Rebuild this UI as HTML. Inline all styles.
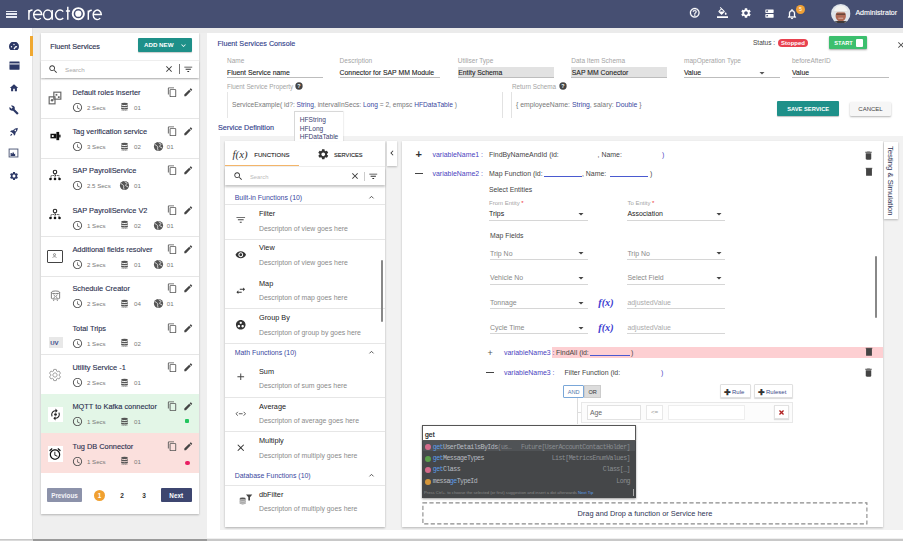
<!DOCTYPE html><html><head><meta charset="utf-8"><style>
*{margin:0;padding:0;box-sizing:border-box}
html,body{width:903px;height:541px;overflow:hidden;background:#efefef;font-family:"Liberation Sans",sans-serif}
.a{position:absolute}
.t{position:absolute;white-space:nowrap;line-height:1}
.mono{font-family:Liberation Mono,monospace}
</style></head><body>
<div class="a" style="left:0.0px;top:0.0px;width:903.0px;height:541.0px;background:#efefef"></div>
<div class="a" style="left:0.0px;top:0.0px;width:903.0px;height:27.5px;background:#464f72"></div>
<div class="a" style="left:0.0px;top:27.5px;width:33.0px;height:513.5px;background:#fff;border-right:1px solid #e2e2e2"></div>
<div class="a" style="left:33.0px;top:27.5px;width:870.0px;height:5.5px;background:#ebebeb"></div>
<div class="a" style="left:40.5px;top:33.0px;width:158.0px;height:481.0px;background:#fff;box-shadow:0 1px 2px rgba(0,0,0,.25)"></div>
<div class="a" style="left:207.0px;top:33.0px;width:696.0px;height:505.0px;background:#fff"></div>
<div class="a" style="left:0.0px;top:539.0px;width:903.0px;height:2.0px;background:#c8c8c8"></div>
<div class="a" style="left:0.0px;top:539.6px;width:33.0px;height:1.4px;background:#dadada"></div>
<div class="a" style="left:33.0px;top:539.0px;width:174.0px;height:2.0px;background:#9a9a9a"></div>
<div class="a" style="left:6.0px;top:10.8px;width:11.0px;height:1.5px;background:#e6e9f2"></div>
<div class="a" style="left:6.0px;top:13.4px;width:11.0px;height:1.5px;background:#e6e9f2"></div>
<div class="a" style="left:6.0px;top:16.2px;width:11.0px;height:1.5px;background:#e6e9f2"></div>
<svg class="a" style="left:0;top:0" width="120" height="27" viewBox="0 0 120 27"><g fill="none" stroke="#fff" stroke-width="1.45"><path d="M28.9 19.8V10M28.9 14c0-2.6 1.4-4 3.6-4"/><path d="M33.6 14.5h8.2a4.1 4.75 0 1 0-1.1 3.6"/><ellipse cx="47.8" cy="14.8" rx="4.2" ry="4.75"/><path d="M52.2 10v9.8"/><path d="M63.2 11.6a4.4 4.75 0 1 0 0 6.4"/><path d="M67.8 6.7v13.1M65.9 11h4.2"/><path d="M88.3 19.8V10.4M88.3 14.2c0-2.6 1.4-3.9 3.5-3.9"/><path d="M93.1 14.5h8.2a4.1 4.75 0 1 0-1.1 3.6"/></g><circle cx="78.3" cy="13.7" r="5.6" fill="none" stroke="#fff" stroke-width="1.9"/><circle cx="78.3" cy="13.7" r="3.1" fill="#fff"/></svg>
<svg class="a" style="left:689.0px;top:7.2px;" width="11.5" height="11.5" viewBox="0 0 24 24"><path d="M11 18h2v-2h-2v2zm1-16C6.48 2 2 6.48 2 12s4.48 10 10 10 10-4.480 10-10S17.52 2 12 2zm0 18c-4.41 0-8-3.59-8-8s3.59-8 8-8 8 3.59 8 8-3.59 8-8 8zm0-14c-2.21 0-4 1.79-4 4h2c0-1.1.9-2 2-2s2 .9 2 2c0 2-3 1.75-3 5h2c0-2.25 3-2.5 3-5 0-2.21-1.79-4-4-4z" fill="#fff" stroke="#fff" stroke-width="0.7"/></svg>
<svg class="a" style="left:717.0px;top:7.0px;" width="11" height="11" viewBox="0 0 24 24"><path d="M16.56 8.94L7.62 0 6.21 1.41l2.38 2.38-5.15 5.15c-.59.59-.59 1.54 0 2.12l5.5 5.5c.29.29.68.44 1.06.44s.77-.15 1.06-.44l5.5-5.5c.59-.58.59-1.53 0-2.12zM5.21 10L10 5.21 14.79 10H5.21zM19 11.5s-2 2.17-2 3.5c0 1.1.9 2 2 2s2-.9 2-2c0-1.33-2-3.5-2-3.5zM0 20h24v4H0z" fill="#fff"/></svg>
<svg class="a" style="left:740.0px;top:7.0px;" width="12" height="12" viewBox="0 0 24 24"><path d="M19.14 12.94c.04-.3.06-.61.06-.94 0-.32-.02-.64-.07-.94l2.03-1.58c.18-.14.23-.41.12-.61l-1.92-3.32c-.12-.22-.37-.29-.59-.22l-2.39.96c-.5-.38-1.03-.7-1.62-.94l-.36-2.54c-.04-.24-.24-.41-.48-.41h-3.84c-.24 0-.43.17-.47.41l-.36 2.54c-.59.24-1.13.57-1.62.94l-2.39-.96c-.22-.08-.47 0-.59.22L2.74 8.87c-.12.21-.08.47.12.61l2.03 1.58c-.05.3-.09.63-.09.94s.02.64.07.94l-2.03 1.58c-.18.14-.23.41-.12.61l1.92 3.32c.12.22.37.29.59.22l2.39-.96c.5.38 1.03.7 1.62.94l.36 2.54c.05.24.24.41.48.41h3.84c.24 0 .44-.17.47-.41l.36-2.54c.59-.24 1.13-.56 1.62-.94l2.39.96c.22.08.47 0 .59-.22l1.92-3.32c.12-.22.07-.47-.12-.61l-2.01-1.58zM12 15.6c-1.98 0-3.6-1.62-3.6-3.6s1.62-3.6 3.6-3.6 3.6 1.62 3.6 3.6-1.62 3.6-3.6 3.6z" fill="#fff"/></svg>
<svg class="a" style="left:764.1px;top:7.5px;" width="11" height="11" viewBox="0 0 24 24"><path d="M20 13H4c-.55 0-1 .45-1 1v6c0 .55.45 1 1 1h16c.55 0 1-.45 1-1v-6c0-.55-.45-1-1-1zM7 19c-1.1 0-2-.9-2-2s.9-2 2-2 2 .9 2 2-.9 2-2 2zM20 3H4c-.55 0-1 .45-1 1v6c0 .55.45 1 1 1h16c.55 0 1-.45 1-1V4c0-.55-.45-1-1-1zM7 9c-1.1 0-2-.9-2-2s.9-2 2-2 2 .9 2 2-.9 2-2 2z" fill="#fff"/></svg>
<svg class="a" style="left:785.6px;top:7.5px;" width="12" height="12" viewBox="0 0 24 24"><path d="M12 22c1.1 0 2-.9 2-2h-4c0 1.1.9 2 2 2zm6-6v-5c0-3.07-1.63-5.64-4.5-6.32V4c0-.83-.67-1.5-1.5-1.5s-1.5.67-1.5 1.5v.68C7.64 5.36 6 7.92 6 11v5l-2 2v1h16v-1l-2-2zm-2 1H8v-6c0-2.48 1.51-4.5 4-4.5s4 2.02 4 4.5v6z" fill="#fff" stroke="#fff" stroke-width="0.6"/></svg>
<svg class="a" style="left:795.7px;top:4.5px;" width="9" height="9" viewBox="0 0 24 24"><circle cx="12" cy="12" r="12" fill="#f0a035"/><text x="12" y="17" font-size="14" text-anchor="middle" fill="#fff" font-family="Liberation Sans">5</text></svg>
<svg class="a" style="left:831.0px;top:3.6px;" width="19.5" height="19.5" viewBox="0 0 24 24"><defs><clipPath id="av"><circle cx="12" cy="12" r="12"/></clipPath></defs><g clip-path="url(#av)"><rect width="24" height="24" fill="#dfe4ea"/><ellipse cx="12" cy="14.8" rx="6.4" ry="6.8" fill="#b06a55"/><path d="M4 9.2c0-4.8 3.6-7 8-7s8 2.2 8 7z" fill="#f4f4f2"/><rect x="3.5" y="8.8" width="17" height="1.5" fill="#e0e0de"/><rect x="6.5" y="11.8" width="11" height="1.5" fill="#2e2624" opacity=".65"/><path d="M9 17.5h6" stroke="#fff" stroke-width="1" opacity=".6"/><path d="M1 24c2-2.5 5-3 11-3s9 .5 11 3z" fill="#3f3a3a"/></g></svg>
<div class="t " style="left:855.4px;top:10px;font-size:7.1px;color:#fff;font-weight:400;-webkit-text-stroke:0.12px #fff">Administrator</div>
<div class="a" style="left:30.0px;top:36.0px;width:2.5px;height:19.5px;background:#f0a830"></div>
<svg class="a" style="left:9.2px;top:41.6px;" width="10" height="8" viewBox="1 1.5 22 17.5"><path d="M4.2 19A11 11 0 1 1 19.8 19Z" fill="#2c3866"/><path d="M12 17l4-6" stroke="#fff" stroke-width="2.6"/><circle cx="6.5" cy="12" r="1.5" fill="#fff"/><circle cx="12" cy="7" r="1.5" fill="#fff"/><circle cx="17.5" cy="12" r="1.5" fill="#fff"/></svg>
<svg class="a" style="left:8.7px;top:60.1px;" width="11" height="11" viewBox="0 0 24 24"><rect x="1" y="3" width="22" height="18" rx="1" fill="#2c3866"/><rect x="1" y="7.5" width="22" height="2.2" fill="#fff"/></svg>
<svg class="a" style="left:9.0px;top:82.8px;" width="10" height="10" viewBox="0 0 24 24"><path d="M10 20v-6h4v6h5v-8h3L12 3 2 12h3v8z" fill="#2c3866"/></svg>
<svg class="a" style="left:9.0px;top:105.0px;" width="10" height="10" viewBox="0 0 24 24"><path d="M22.7 19l-9.1-9.1c.9-2.3.4-5-1.5-6.9-2-2-5-2.4-7.4-1.3L9 6 6 9 1.6 4.7C.4 7.1.9 10.1 2.9 12.1c1.9 1.9 4.6 2.4 6.9 1.5l9.1 9.1c.4.4 1 .4 1.4 0l2.3-2.3c.5-.4.5-1.1.1-1.4z" fill="#2c3866"/></svg>
<svg class="a" style="left:8.7px;top:126.6px;" width="10" height="10" viewBox="0 0 24 24"><path d="M21.5 2.5c-4.5-.3-8.6 1.6-11.6 5.2L5.5 8.5 2.5 11.5l4 1 4.5 4.5 1 4 3-3 .8-4.4c3.6-3 5.5-7.1 5.2-11.6zM16.5 9.5a2 2 0 1 1 0-3 2 2 0 0 1 0 3zM3 21c0-2 1-4 3-5l2 2c-1 2-3 3-5 3z" fill="#2c3866"/></svg>
<svg class="a" style="left:8.2px;top:148.1px;" width="11" height="10" viewBox="0 0 24 24"><rect x="1.5" y="2.5" width="21" height="19" fill="none" stroke="#56607e" stroke-width="2.4"/><path d="M5 19v-7h3v4l3-7 3 6 2-2v6z" fill="#2c3866"/></svg>
<svg class="a" style="left:8.7px;top:171.0px;" width="10" height="10" viewBox="0 0 24 24"><path d="M19.14 12.94c.04-.3.06-.61.06-.94 0-.32-.02-.64-.07-.94l2.03-1.58c.18-.14.23-.41.12-.61l-1.92-3.32c-.12-.22-.37-.29-.59-.22l-2.39.96c-.5-.38-1.03-.7-1.62-.94l-.36-2.54c-.04-.24-.24-.41-.48-.41h-3.84c-.24 0-.43.17-.47.41l-.36 2.54c-.59.24-1.13.57-1.62.94l-2.39-.96c-.22-.08-.47 0-.59.22L2.74 8.87c-.12.21-.08.47.12.61l2.03 1.58c-.05.3-.09.63-.09.94s.02.64.07.94l-2.03 1.58c-.18.14-.23.41-.12.61l1.92 3.32c.12.22.37.29.59.22l2.39-.96c.5.38 1.03.7 1.62.94l.36 2.54c.05.24.24.41.48.41h3.84c.24 0 .44-.17.47-.41l.36-2.54c.59-.24 1.13-.56 1.62-.94l2.39.96c.22.08.47 0 .59-.22l1.92-3.32c.12-.22.07-.47-.12-.61l-2.01-1.58zM12 15.6c-1.98 0-3.6-1.62-3.6-3.6s1.62-3.6 3.6-3.6 3.6 1.62 3.6 3.6-1.62 3.6-3.6 3.6z" fill="#2c3866"/></svg>
<div class="t " style="left:50.3px;top:43px;font-size:7.2px;color:#2a2f4e;font-weight:400;-webkit-text-stroke:0.15px #2a2f4e">Fluent Services</div>
<div class="a" style="left:138.0px;top:38.0px;width:54.0px;height:14.0px;background:#1e9089;border-radius:1px;box-shadow:0 1px 1px rgba(0,0,0,.2)"></div>
<div class="t " style="left:144.0px;top:42px;font-size:6.2px;color:#fff;font-weight:700;">ADD NEW</div>
<svg class="a" style="left:178.5px;top:40.5px;" width="9" height="9" viewBox="0 0 24 24"><path d="M16.59 8.59L12 13.17 7.41 8.59 6 10l6 6 6-6z" fill="#fff"/></svg>
<div class="a" style="left:40.5px;top:59.5px;width:158.0px;height:18.5px;background:#fff;box-shadow:0 1.5px 1.5px rgba(0,0,0,.25);border-top:1px solid #eee"></div>
<svg class="a" style="left:48.0px;top:63.5px;" width="10.5" height="10.5" viewBox="0 0 24 24"><path d="M15.5 14h-.79l-.28-.27C15.41 12.59 16 11.11 16 9.5 16 5.91 13.09 3 9.5 3S3 5.91 3 9.5 5.91 16 9.5 16c1.610 0 3.09-.59 4.23-1.57l.27.28v.79l5 4.99L20.49 19l-4.99-5zm-6 0C7.01 14 5 11.99 5 9.5S7.01 5 9.5 5 14 7.01 14 9.5 11.99 14 9.5 14z" fill="#333"/></svg>
<div class="t " style="left:65.0px;top:67px;font-size:6.2px;color:#aaa;font-weight:400;">Search</div>
<svg class="a" style="left:164.0px;top:64.0px;" width="10" height="10" viewBox="0 0 24 24"><path d="M19 6.41L17.59 5 12 10.59 6.41 5 5 6.41 10.59 12 5 17.59 6.41 19 12 13.41 17.59 19 19 17.59 13.41 12z" fill="#333"/></svg>
<div class="a" style="left:178.5px;top:64.0px;width:0.8px;height:9.7px;background:#777"></div>
<svg class="a" style="left:182.7px;top:64.0px;" width="10.5" height="10.5" viewBox="0 0 24 24"><path d="M10 18h4v-2h-4v2zM3 6v2h18V6H3zm3 7h12v-2H6v2z" fill="#333"/></svg>
<div class="a" style="left:40.5px;top:118.4px;width:158.0px;height:0.8px;background:#e6e6e6"></div>
<div class="t " style="left:72.4px;top:89px;font-size:7.4px;color:#2a2f4e;font-weight:400;-webkit-text-stroke:0.12px #2a2f4e">Default roles inserter</div>
<svg class="a" style="left:71.8px;top:101.7px;" width="11" height="11" viewBox="0 0 24 24"><path d="M11.99 2C6.47 2 2 6.48 2 12s4.47 10 9.99 10C17.52 22 22 17.52 22 12S17.52 2 11.99 2zM12 20c-4.42 0-8-3.58-8-8s3.58-8 8-8 8 3.58 8 8-3.58 8-8 8zm.5-13H11v6l5.25 3.15.75-1.23-4.5-2.67z" fill="#555"/></svg>
<div class="t " style="left:87.0px;top:105px;font-size:6.1px;color:#777;font-weight:400;">2 Secs</div>
<svg class="a" style="left:120.0px;top:102.4px;" width="9" height="9.5" viewBox="0 0 24 24"><ellipse cx="12" cy="4.5" rx="9" ry="3" fill="#555"/><path d="M3 7.5c0 3 18 3 18 0v3.5c0 3-18 3-18 0zM3 13.5c0 3 18 3 18 0V17c0 3-18 3-18 0z" fill="#555"/><path d="M3 19.5c0 3 18 3 18 0v.5c0 3.5-18 3.5-18 0z" fill="#555"/></svg>
<div class="t " style="left:134.0px;top:105px;font-size:6.1px;color:#777;font-weight:400;">01</div>
<svg class="a" style="left:166.8px;top:86.6px;" width="10.5" height="10.5" viewBox="0 0 24 24"><path d="M16 1H4c-1.1 0-2 .9-2 2v14h2V3h12V1zm3 4H8c-1.1 0-2 .9-2 2v14c0 1.1.9 2 2 2h11c1.1 0 2-.9 2-2V7c0-1.1-.9-2-2-2zm0 16H8V7h11v14z" fill="#555"/></svg>
<svg class="a" style="left:182.8px;top:86.6px;" width="10.5" height="10.5" viewBox="0 0 24 24"><path d="M3 17.25V21h3.75L17.81 9.94l-3.75-3.75L3 17.25zM20.71 7.04c.39-.39.39-1.02 0-1.41l-2.34-2.34a.9959.9959 0 0 0-1.41 0l-1.83 1.83 3.75 3.75 1.83-1.830z" fill="#444"/></svg>
<svg class="a" style="left:48.0px;top:91.0px;" width="14" height="14" viewBox="0 0 24 24"><rect x="10" y="2" width="12" height="12" fill="none" stroke="#666" stroke-width="2"/><rect x="2" y="10" width="10" height="12" fill="none" stroke="#666" stroke-width="2"/><rect x="13" y="5" width="3" height="3" fill="#666"/><rect x="17" y="9" width="3" height="3" fill="#666"/><circle cx="7" cy="16" r="2.2" fill="#666"/></svg>
<div class="a" style="left:40.5px;top:157.7px;width:158.0px;height:0.8px;background:#e6e6e6"></div>
<div class="t " style="left:72.4px;top:128px;font-size:7.4px;color:#2a2f4e;font-weight:400;-webkit-text-stroke:0.12px #2a2f4e">Tag verification service</div>
<svg class="a" style="left:71.8px;top:141.0px;" width="11" height="11" viewBox="0 0 24 24"><path d="M11.99 2C6.47 2 2 6.48 2 12s4.47 10 9.99 10C17.52 22 22 17.52 22 12S17.52 2 11.99 2zM12 20c-4.42 0-8-3.58-8-8s3.58-8 8-8 8 3.58 8 8-3.58 8-8 8zm.5-13H11v6l5.25 3.15.75-1.23-4.5-2.67z" fill="#555"/></svg>
<div class="t " style="left:87.0px;top:144px;font-size:6.1px;color:#777;font-weight:400;">3 Secs</div>
<svg class="a" style="left:120.0px;top:141.8px;" width="9" height="9.5" viewBox="0 0 24 24"><ellipse cx="12" cy="4.5" rx="9" ry="3" fill="#555"/><path d="M3 7.5c0 3 18 3 18 0v3.5c0 3-18 3-18 0zM3 13.5c0 3 18 3 18 0V17c0 3-18 3-18 0z" fill="#555"/><path d="M3 19.5c0 3 18 3 18 0v.5c0 3.5-18 3.5-18 0z" fill="#555"/></svg>
<div class="t " style="left:134.0px;top:144px;font-size:6.1px;color:#777;font-weight:400;">02</div>
<svg class="a" style="left:152.8px;top:141.0px;" width="11" height="11" viewBox="0 0 24 24"><circle cx="12" cy="12" r="10" fill="#555"/><path d="M4.5 8.5c1.5-.5 3 0 3.5 1.5s2 1.5 2.5 3-1 2.5-.5 4 1 2.5 1 4M13 2.5c-.5 1.5.5 3 2 3s2.5 1 2 2.5-2 1.5-2.5 3 1 2.5 2.5 2.5 2.5 1 2.5 2.5" fill="none" stroke="#fff" stroke-width="1.7"/></svg>
<div class="t " style="left:166.8px;top:144px;font-size:6.1px;color:#777;font-weight:400;">01</div>
<svg class="a" style="left:166.8px;top:125.9px;" width="10.5" height="10.5" viewBox="0 0 24 24"><path d="M16 1H4c-1.1 0-2 .9-2 2v14h2V3h12V1zm3 4H8c-1.1 0-2 .9-2 2v14c0 1.1.9 2 2 2h11c1.1 0 2-.9 2-2V7c0-1.1-.9-2-2-2zm0 16H8V7h11v14z" fill="#555"/></svg>
<svg class="a" style="left:182.8px;top:125.9px;" width="10.5" height="10.5" viewBox="0 0 24 24"><path d="M3 17.25V21h3.75L17.81 9.94l-3.75-3.75L3 17.25zM20.71 7.04c.39-.39.39-1.02 0-1.41l-2.34-2.34a.9959.9959 0 0 0-1.41 0l-1.83 1.83 3.75 3.75 1.83-1.830z" fill="#444"/></svg>
<svg class="a" style="left:48.5px;top:131.0px;" width="13" height="11" viewBox="0 0 24 24"><rect x="1" y="6" width="13" height="10" fill="#111"/><rect x="14" y="2" width="6" height="18" fill="#111"/><rect x="20" y="8" width="3" height="6" fill="#111"/><rect x="4" y="9" width="4" height="4" fill="#fff"/></svg>
<div class="t " style="left:72.4px;top:167px;font-size:7.4px;color:#2a2f4e;font-weight:400;-webkit-text-stroke:0.12px #2a2f4e">SAP PayrollService</div>
<svg class="a" style="left:71.8px;top:180.3px;" width="11" height="11" viewBox="0 0 24 24"><path d="M11.99 2C6.47 2 2 6.48 2 12s4.47 10 9.99 10C17.52 22 22 17.52 22 12S17.52 2 11.99 2zM12 20c-4.42 0-8-3.58-8-8s3.58-8 8-8 8 3.58 8 8-3.58 8-8 8zm.5-13H11v6l5.25 3.15.75-1.23-4.5-2.67z" fill="#555"/></svg>
<div class="t " style="left:87.0px;top:183px;font-size:6.1px;color:#777;font-weight:400;">2.5 Secs</div>
<svg class="a" style="left:119.0px;top:180.3px;" width="11" height="11" viewBox="0 0 24 24"><circle cx="12" cy="12" r="10" fill="#555"/><path d="M4.5 8.5c1.5-.5 3 0 3.5 1.5s2 1.5 2.5 3-1 2.5-.5 4 1 2.5 1 4M13 2.5c-.5 1.5.5 3 2 3s2.5 1 2 2.5-2 1.5-2.5 3 1 2.5 2.5 2.5 2.5 1 2.5 2.5" fill="none" stroke="#fff" stroke-width="1.7"/></svg>
<div class="t " style="left:134.0px;top:183px;font-size:6.1px;color:#777;font-weight:400;">01</div>
<svg class="a" style="left:166.8px;top:165.3px;" width="10.5" height="10.5" viewBox="0 0 24 24"><path d="M16 1H4c-1.1 0-2 .9-2 2v14h2V3h12V1zm3 4H8c-1.1 0-2 .9-2 2v14c0 1.1.9 2 2 2h11c1.1 0 2-.9 2-2V7c0-1.1-.9-2-2-2zm0 16H8V7h11v14z" fill="#555"/></svg>
<svg class="a" style="left:182.8px;top:165.3px;" width="10.5" height="10.5" viewBox="0 0 24 24"><path d="M3 17.25V21h3.75L17.81 9.94l-3.75-3.75L3 17.25zM20.71 7.04c.39-.39.39-1.02 0-1.41l-2.34-2.34a.9959.9959 0 0 0-1.41 0l-1.83 1.83 3.75 3.75 1.83-1.830z" fill="#444"/></svg>
<svg class="a" style="left:48.0px;top:168.6px;" width="14" height="12" viewBox="0 0 24 24"><circle cx="12" cy="6" r="3.5" fill="none" stroke="#222" stroke-width="2.2"/><path d="M4 19v-6h16v6M12 10v9" fill="none" stroke="#222" stroke-width="1.8" stroke-dasharray="2 1.5"/><circle cx="3" cy="20" r="2.6" fill="#111"/><circle cx="12" cy="20" r="2.6" fill="#111"/><circle cx="21" cy="20" r="2.6" fill="#111"/></svg>
<div class="a" style="left:40.5px;top:236.4px;width:158.0px;height:0.8px;background:#e6e6e6"></div>
<div class="t " style="left:72.4px;top:207px;font-size:7.4px;color:#2a2f4e;font-weight:400;-webkit-text-stroke:0.12px #2a2f4e">SAP PayrollService V2</div>
<svg class="a" style="left:71.8px;top:219.7px;" width="11" height="11" viewBox="0 0 24 24"><path d="M11.99 2C6.47 2 2 6.48 2 12s4.47 10 9.99 10C17.52 22 22 17.52 22 12S17.52 2 11.99 2zM12 20c-4.42 0-8-3.58-8-8s3.58-8 8-8 8 3.58 8 8-3.58 8-8 8zm.5-13H11v6l5.25 3.15.75-1.23-4.5-2.67z" fill="#555"/></svg>
<div class="t " style="left:87.0px;top:223px;font-size:6.1px;color:#777;font-weight:400;">1 Secs</div>
<svg class="a" style="left:120.0px;top:220.4px;" width="9" height="9.5" viewBox="0 0 24 24"><ellipse cx="12" cy="4.5" rx="9" ry="3" fill="#555"/><path d="M3 7.5c0 3 18 3 18 0v3.5c0 3-18 3-18 0zM3 13.5c0 3 18 3 18 0V17c0 3-18 3-18 0z" fill="#555"/><path d="M3 19.5c0 3 18 3 18 0v.5c0 3.5-18 3.5-18 0z" fill="#555"/></svg>
<div class="t " style="left:134.0px;top:223px;font-size:6.1px;color:#777;font-weight:400;">02</div>
<svg class="a" style="left:152.8px;top:219.7px;" width="11" height="11" viewBox="0 0 24 24"><circle cx="12" cy="12" r="10" fill="#555"/><path d="M4.5 8.5c1.5-.5 3 0 3.5 1.5s2 1.5 2.5 3-1 2.5-.5 4 1 2.5 1 4M13 2.5c-.5 1.5.5 3 2 3s2.5 1 2 2.5-2 1.5-2.5 3 1 2.5 2.5 2.5 2.5 1 2.5 2.5" fill="none" stroke="#fff" stroke-width="1.7"/></svg>
<div class="t " style="left:166.8px;top:223px;font-size:6.1px;color:#777;font-weight:400;">01</div>
<svg class="a" style="left:166.8px;top:204.6px;" width="10.5" height="10.5" viewBox="0 0 24 24"><path d="M16 1H4c-1.1 0-2 .9-2 2v14h2V3h12V1zm3 4H8c-1.1 0-2 .9-2 2v14c0 1.1.9 2 2 2h11c1.1 0 2-.9 2-2V7c0-1.1-.9-2-2-2zm0 16H8V7h11v14z" fill="#555"/></svg>
<svg class="a" style="left:182.8px;top:204.6px;" width="10.5" height="10.5" viewBox="0 0 24 24"><path d="M3 17.25V21h3.75L17.81 9.94l-3.75-3.75L3 17.25zM20.71 7.04c.39-.39.39-1.02 0-1.41l-2.34-2.34a.9959.9959 0 0 0-1.41 0l-1.83 1.83 3.75 3.75 1.83-1.830z" fill="#444"/></svg>
<svg class="a" style="left:48.0px;top:208.0px;" width="14" height="12" viewBox="0 0 24 24"><circle cx="12" cy="6" r="3.5" fill="none" stroke="#222" stroke-width="2.2"/><path d="M4 19v-6h16v6M12 10v9" fill="none" stroke="#222" stroke-width="1.8" stroke-dasharray="2 1.5"/><circle cx="3" cy="20" r="2.6" fill="#111"/><circle cx="12" cy="20" r="2.6" fill="#111"/><circle cx="21" cy="20" r="2.6" fill="#111"/></svg>
<div class="a" style="left:40.5px;top:275.7px;width:158.0px;height:0.8px;background:#e6e6e6"></div>
<div class="t " style="left:72.4px;top:246px;font-size:7.4px;color:#2a2f4e;font-weight:400;-webkit-text-stroke:0.12px #2a2f4e">Additional fields resolver</div>
<svg class="a" style="left:71.8px;top:259.0px;" width="11" height="11" viewBox="0 0 24 24"><path d="M11.99 2C6.47 2 2 6.48 2 12s4.47 10 9.99 10C17.52 22 22 17.52 22 12S17.52 2 11.99 2zM12 20c-4.42 0-8-3.58-8-8s3.58-8 8-8 8 3.58 8 8-3.58 8-8 8zm.5-13H11v6l5.25 3.15.75-1.23-4.5-2.67z" fill="#555"/></svg>
<div class="t " style="left:87.0px;top:262px;font-size:6.1px;color:#777;font-weight:400;">2 Secs</div>
<svg class="a" style="left:120.0px;top:259.7px;" width="9" height="9.5" viewBox="0 0 24 24"><ellipse cx="12" cy="4.5" rx="9" ry="3" fill="#555"/><path d="M3 7.5c0 3 18 3 18 0v3.5c0 3-18 3-18 0zM3 13.5c0 3 18 3 18 0V17c0 3-18 3-18 0z" fill="#555"/><path d="M3 19.5c0 3 18 3 18 0v.5c0 3.5-18 3.5-18 0z" fill="#555"/></svg>
<div class="t " style="left:134.0px;top:262px;font-size:6.1px;color:#777;font-weight:400;">01</div>
<svg class="a" style="left:152.8px;top:259.0px;" width="11" height="11" viewBox="0 0 24 24"><circle cx="12" cy="12" r="10" fill="#555"/><path d="M4.5 8.5c1.5-.5 3 0 3.5 1.5s2 1.5 2.5 3-1 2.5-.5 4 1 2.5 1 4M13 2.5c-.5 1.5.5 3 2 3s2.5 1 2 2.5-2 1.5-2.5 3 1 2.5 2.5 2.5 2.5 1 2.5 2.5" fill="none" stroke="#fff" stroke-width="1.7"/></svg>
<div class="t " style="left:166.8px;top:262px;font-size:6.1px;color:#777;font-weight:400;">01</div>
<svg class="a" style="left:166.8px;top:243.9px;" width="10.5" height="10.5" viewBox="0 0 24 24"><path d="M16 1H4c-1.1 0-2 .9-2 2v14h2V3h12V1zm3 4H8c-1.1 0-2 .9-2 2v14c0 1.1.9 2 2 2h11c1.1 0 2-.9 2-2V7c0-1.1-.9-2-2-2zm0 16H8V7h11v14z" fill="#555"/></svg>
<svg class="a" style="left:182.8px;top:243.9px;" width="10.5" height="10.5" viewBox="0 0 24 24"><path d="M3 17.25V21h3.75L17.81 9.94l-3.75-3.75L3 17.25zM20.71 7.04c.39-.39.39-1.02 0-1.41l-2.34-2.34a.9959.9959 0 0 0-1.41 0l-1.83 1.83 3.75 3.75 1.83-1.830z" fill="#444"/></svg>
<div class="a" style="left:47.0px;top:250.0px;width:15.7px;height:12.8px;border:1.3px solid #444;border-radius:1px"></div>
<svg class="a" style="left:52.0px;top:252.5px;" width="5" height="5" viewBox="0 0 24 24"><circle cx="12" cy="8" r="5" fill="none" stroke="#555" stroke-width="3"/><path d="M3 22c1-6 17-6 18 0" fill="none" stroke="#555" stroke-width="3"/></svg>
<div class="t " style="left:72.4px;top:285px;font-size:7.4px;color:#2a2f4e;font-weight:400;-webkit-text-stroke:0.12px #2a2f4e">Schedule Creator</div>
<svg class="a" style="left:71.8px;top:298.3px;" width="11" height="11" viewBox="0 0 24 24"><path d="M11.99 2C6.47 2 2 6.48 2 12s4.47 10 9.99 10C17.52 22 22 17.52 22 12S17.52 2 11.99 2zM12 20c-4.42 0-8-3.58-8-8s3.58-8 8-8 8 3.58 8 8-3.58 8-8 8zm.5-13H11v6l5.25 3.15.75-1.23-4.5-2.67z" fill="#555"/></svg>
<div class="t " style="left:87.0px;top:301px;font-size:6.1px;color:#777;font-weight:400;">2 Secs</div>
<svg class="a" style="left:120.0px;top:299.1px;" width="9" height="9.5" viewBox="0 0 24 24"><ellipse cx="12" cy="4.5" rx="9" ry="3" fill="#555"/><path d="M3 7.5c0 3 18 3 18 0v3.5c0 3-18 3-18 0zM3 13.5c0 3 18 3 18 0V17c0 3-18 3-18 0z" fill="#555"/><path d="M3 19.5c0 3 18 3 18 0v.5c0 3.5-18 3.5-18 0z" fill="#555"/></svg>
<div class="t " style="left:134.0px;top:301px;font-size:6.1px;color:#777;font-weight:400;">04</div>
<svg class="a" style="left:152.8px;top:298.3px;" width="11" height="11" viewBox="0 0 24 24"><circle cx="12" cy="12" r="10" fill="#555"/><path d="M4.5 8.5c1.5-.5 3 0 3.5 1.5s2 1.5 2.5 3-1 2.5-.5 4 1 2.5 1 4M13 2.5c-.5 1.5.5 3 2 3s2.5 1 2 2.5-2 1.5-2.5 3 1 2.5 2.5 2.5 2.5 1 2.5 2.5" fill="none" stroke="#fff" stroke-width="1.7"/></svg>
<div class="t " style="left:166.8px;top:301px;font-size:6.1px;color:#777;font-weight:400;">01</div>
<svg class="a" style="left:166.8px;top:283.3px;" width="10.5" height="10.5" viewBox="0 0 24 24"><path d="M16 1H4c-1.1 0-2 .9-2 2v14h2V3h12V1zm3 4H8c-1.1 0-2 .9-2 2v14c0 1.1.9 2 2 2h11c1.1 0 2-.9 2-2V7c0-1.1-.9-2-2-2zm0 16H8V7h11v14z" fill="#555"/></svg>
<svg class="a" style="left:182.8px;top:283.3px;" width="10.5" height="10.5" viewBox="0 0 24 24"><path d="M3 17.25V21h3.75L17.81 9.94l-3.75-3.75L3 17.25zM20.71 7.04c.39-.39.39-1.02 0-1.41l-2.34-2.34a.9959.9959 0 0 0-1.41 0l-1.83 1.83 3.75 3.75 1.83-1.830z" fill="#444"/></svg>
<svg class="a" style="left:49.5px;top:287.8px;" width="11" height="16" viewBox="0 0 24 24"><ellipse cx="12" cy="4" rx="9" ry="3" fill="none" stroke="#666" stroke-width="1.8"/><path d="M3 4v13c0 2 18 2 18 0V4" fill="none" stroke="#666" stroke-width="1.8"/><path d="M8 9l3 4-3 4M16 9l-3 4 3 4M8 20v3M16 20v3" stroke="#666" stroke-width="1.6" fill="none"/></svg>
<div class="a" style="left:40.5px;top:354.3px;width:158.0px;height:0.8px;background:#e6e6e6"></div>
<div class="t " style="left:72.4px;top:325px;font-size:7.4px;color:#2a2f4e;font-weight:400;-webkit-text-stroke:0.12px #2a2f4e">Total Trips</div>
<svg class="a" style="left:71.8px;top:337.6px;" width="11" height="11" viewBox="0 0 24 24"><path d="M11.99 2C6.47 2 2 6.48 2 12s4.47 10 9.99 10C17.52 22 22 17.52 22 12S17.52 2 11.99 2zM12 20c-4.42 0-8-3.58-8-8s3.58-8 8-8 8 3.58 8 8-3.58 8-8 8zm.5-13H11v6l5.25 3.15.75-1.23-4.5-2.67z" fill="#555"/></svg>
<div class="t " style="left:87.0px;top:341px;font-size:6.1px;color:#777;font-weight:400;">1 Secs</div>
<svg class="a" style="left:120.0px;top:338.4px;" width="9" height="9.5" viewBox="0 0 24 24"><ellipse cx="12" cy="4.5" rx="9" ry="3" fill="#555"/><path d="M3 7.5c0 3 18 3 18 0v3.5c0 3-18 3-18 0zM3 13.5c0 3 18 3 18 0V17c0 3-18 3-18 0z" fill="#555"/><path d="M3 19.5c0 3 18 3 18 0v.5c0 3.5-18 3.5-18 0z" fill="#555"/></svg>
<div class="t " style="left:134.0px;top:341px;font-size:6.1px;color:#777;font-weight:400;">02</div>
<svg class="a" style="left:166.8px;top:322.6px;" width="10.5" height="10.5" viewBox="0 0 24 24"><path d="M16 1H4c-1.1 0-2 .9-2 2v14h2V3h12V1zm3 4H8c-1.1 0-2 .9-2 2v14c0 1.1.9 2 2 2h11c1.1 0 2-.9 2-2V7c0-1.1-.9-2-2-2zm0 16H8V7h11v14z" fill="#555"/></svg>
<svg class="a" style="left:182.8px;top:322.6px;" width="10.5" height="10.5" viewBox="0 0 24 24"><path d="M3 17.25V21h3.75L17.81 9.94l-3.75-3.75L3 17.25zM20.71 7.04c.39-.39.39-1.02 0-1.41l-2.34-2.34a.9959.9959 0 0 0-1.41 0l-1.83 1.83 3.75 3.75 1.83-1.830z" fill="#444"/></svg>
<div class="a" style="left:48.5px;top:336.6px;width:14.2px;height:11.0px;background:#e8e8e8"></div>
<div class="t " style="left:50.2px;top:340px;font-size:6px;color:#3a4a8a;font-weight:700;">UV</div>
<div class="a" style="left:40.5px;top:393.7px;width:158.0px;height:0.8px;background:#e6e6e6"></div>
<div class="t " style="left:72.4px;top:364px;font-size:7.4px;color:#2a2f4e;font-weight:400;-webkit-text-stroke:0.12px #2a2f4e">Utility Service -1</div>
<svg class="a" style="left:71.8px;top:377.0px;" width="11" height="11" viewBox="0 0 24 24"><path d="M11.99 2C6.47 2 2 6.48 2 12s4.47 10 9.99 10C17.52 22 22 17.52 22 12S17.52 2 11.99 2zM12 20c-4.42 0-8-3.58-8-8s3.58-8 8-8 8 3.58 8 8-3.58 8-8 8zm.5-13H11v6l5.25 3.15.75-1.23-4.5-2.67z" fill="#555"/></svg>
<div class="t " style="left:87.0px;top:380px;font-size:6.1px;color:#777;font-weight:400;">2 Secs</div>
<svg class="a" style="left:120.0px;top:377.7px;" width="9" height="9.5" viewBox="0 0 24 24"><ellipse cx="12" cy="4.5" rx="9" ry="3" fill="#555"/><path d="M3 7.5c0 3 18 3 18 0v3.5c0 3-18 3-18 0zM3 13.5c0 3 18 3 18 0V17c0 3-18 3-18 0z" fill="#555"/><path d="M3 19.5c0 3 18 3 18 0v.5c0 3.5-18 3.5-18 0z" fill="#555"/></svg>
<div class="t " style="left:134.0px;top:380px;font-size:6.1px;color:#777;font-weight:400;">01</div>
<svg class="a" style="left:166.8px;top:361.9px;" width="10.5" height="10.5" viewBox="0 0 24 24"><path d="M16 1H4c-1.1 0-2 .9-2 2v14h2V3h12V1zm3 4H8c-1.1 0-2 .9-2 2v14c0 1.1.9 2 2 2h11c1.1 0 2-.9 2-2V7c0-1.1-.9-2-2-2zm0 16H8V7h11v14z" fill="#555"/></svg>
<svg class="a" style="left:182.8px;top:361.9px;" width="10.5" height="10.5" viewBox="0 0 24 24"><path d="M3 17.25V21h3.75L17.81 9.94l-3.75-3.75L3 17.25zM20.71 7.04c.39-.39.39-1.02 0-1.41l-2.34-2.34a.9959.9959 0 0 0-1.41 0l-1.83 1.83 3.75 3.75 1.83-1.830z" fill="#444"/></svg>
<svg class="a" style="left:48.0px;top:367.5px;" width="14" height="14" viewBox="0 0 24 24"><path d="M19.14 12.94c.04-.3.06-.61.06-.94 0-.32-.02-.64-.07-.94l2.03-1.58c.18-.14.23-.41.12-.61l-1.92-3.32c-.12-.22-.37-.29-.59-.22l-2.39.96c-.5-.38-1.03-.7-1.62-.94l-.36-2.54c-.04-.24-.24-.41-.48-.41h-3.84c-.24 0-.43.17-.47.41l-.36 2.54c-.59.24-1.13.57-1.62.94l-2.39-.96c-.22-.08-.47 0-.59.22L2.74 8.87c-.12.21-.08.47.12.61l2.03 1.58c-.05.3-.09.63-.09.94s.02.64.07.94l-2.03 1.58c-.18.14-.23.41-.12.61l1.92 3.32c.12.22.37.29.59.22l2.39-.96c.5.38 1.03.7 1.62.94l.36 2.54c.05.24.24.41.48.41h3.84c.24 0 .44-.17.47-.41l.36-2.54c.59-.24 1.13-.56 1.62-.94l2.39.96c.22.08.47 0 .59-.22l1.92-3.32c.12-.22.07-.47-.12-.61l-2.01-1.58zM12 15.6c-1.98 0-3.6-1.62-3.6-3.6s1.62-3.6 3.6-3.6 3.6 1.62 3.6 3.6-1.62 3.6-3.6 3.6z" fill="none" stroke="#777" stroke-width="1.2"/></svg>
<div class="a" style="left:40.5px;top:393.8px;width:158.0px;height:39.5px;background:#e3f6e7"></div>
<div class="t " style="left:72.4px;top:403px;font-size:7.4px;color:#2a2f4e;font-weight:400;-webkit-text-stroke:0.12px #2a2f4e">MQTT to Kafka connector</div>
<svg class="a" style="left:71.8px;top:416.3px;" width="11" height="11" viewBox="0 0 24 24"><path d="M11.99 2C6.47 2 2 6.48 2 12s4.47 10 9.99 10C17.52 22 22 17.52 22 12S17.52 2 11.99 2zM12 20c-4.42 0-8-3.58-8-8s3.58-8 8-8 8 3.58 8 8-3.58 8-8 8zm.5-13H11v6l5.25 3.15.75-1.23-4.5-2.67z" fill="#555"/></svg>
<div class="t " style="left:87.0px;top:419px;font-size:6.1px;color:#777;font-weight:400;">1 Secs</div>
<svg class="a" style="left:120.0px;top:417.1px;" width="9" height="9.5" viewBox="0 0 24 24"><ellipse cx="12" cy="4.5" rx="9" ry="3" fill="#555"/><path d="M3 7.5c0 3 18 3 18 0v3.5c0 3-18 3-18 0zM3 13.5c0 3 18 3 18 0V17c0 3-18 3-18 0z" fill="#555"/><path d="M3 19.5c0 3 18 3 18 0v.5c0 3.5-18 3.5-18 0z" fill="#555"/></svg>
<div class="t " style="left:134.0px;top:419px;font-size:6.1px;color:#777;font-weight:400;">01</div>
<svg class="a" style="left:166.8px;top:401.3px;" width="10.5" height="10.5" viewBox="0 0 24 24"><path d="M16 1H4c-1.1 0-2 .9-2 2v14h2V3h12V1zm3 4H8c-1.1 0-2 .9-2 2v14c0 1.1.9 2 2 2h11c1.1 0 2-.9 2-2V7c0-1.1-.9-2-2-2zm0 16H8V7h11v14z" fill="#555"/></svg>
<svg class="a" style="left:182.8px;top:401.3px;" width="10.5" height="10.5" viewBox="0 0 24 24"><path d="M3 17.25V21h3.75L17.81 9.94l-3.75-3.75L3 17.25zM20.71 7.04c.39-.39.39-1.02 0-1.41l-2.34-2.34a.9959.9959 0 0 0-1.41 0l-1.83 1.83 3.75 3.75 1.83-1.830z" fill="#444"/></svg>
<div class="a" style="left:47.5px;top:406.8px;width:15.0px;height:15.0px;background:#fff"></div>
<svg class="a" style="left:48.5px;top:407.8px;" width="13" height="13" viewBox="0 0 24 24"><path d="M12 6v3l4-4-4-4v3c-4.42 0-8 3.58-8 8 0 1.57.46 3.03 1.24 4.26L6.7 14.8c-.45-.83-.7-1.79-.7-2.8 0-3.31 2.69-6 6-6zm6.76 1.74L17.3 9.2c.44.84.7 1.79.7 2.8 0 3.31-2.69 6-6 6v-3l-4 4 4 4v-3c4.42 0 8-3.58 8-8 0-1.57-.46-3.03-1.24-4.26z" fill="#222"/><circle cx="12" cy="12" r="2.5" fill="#222"/></svg>
<div class="a" style="left:185.0px;top:418.8px;width:4.0px;height:4.0px;background:#22c55e;border-radius:1px"></div>
<div class="a" style="left:40.5px;top:433.1px;width:158.0px;height:39.5px;background:#fbe0dd"></div>
<div class="t " style="left:72.4px;top:443px;font-size:7.4px;color:#2a2f4e;font-weight:400;-webkit-text-stroke:0.12px #2a2f4e">Tug DB Connector</div>
<svg class="a" style="left:71.8px;top:455.6px;" width="11" height="11" viewBox="0 0 24 24"><path d="M11.99 2C6.47 2 2 6.48 2 12s4.47 10 9.99 10C17.52 22 22 17.52 22 12S17.52 2 11.99 2zM12 20c-4.42 0-8-3.58-8-8s3.58-8 8-8 8 3.58 8 8-3.58 8-8 8zm.5-13H11v6l5.25 3.15.75-1.23-4.5-2.67z" fill="#555"/></svg>
<div class="t " style="left:87.0px;top:459px;font-size:6.1px;color:#777;font-weight:400;">1 Secs</div>
<svg class="a" style="left:120.0px;top:456.4px;" width="9" height="9.5" viewBox="0 0 24 24"><ellipse cx="12" cy="4.5" rx="9" ry="3" fill="#555"/><path d="M3 7.5c0 3 18 3 18 0v3.5c0 3-18 3-18 0zM3 13.5c0 3 18 3 18 0V17c0 3-18 3-18 0z" fill="#555"/><path d="M3 19.5c0 3 18 3 18 0v.5c0 3.5-18 3.5-18 0z" fill="#555"/></svg>
<div class="t " style="left:134.0px;top:459px;font-size:6.1px;color:#777;font-weight:400;">01</div>
<svg class="a" style="left:166.8px;top:440.6px;" width="10.5" height="10.5" viewBox="0 0 24 24"><path d="M16 1H4c-1.1 0-2 .9-2 2v14h2V3h12V1zm3 4H8c-1.1 0-2 .9-2 2v14c0 1.1.9 2 2 2h11c1.1 0 2-.9 2-2V7c0-1.1-.9-2-2-2zm0 16H8V7h11v14z" fill="#555"/></svg>
<svg class="a" style="left:182.8px;top:440.6px;" width="10.5" height="10.5" viewBox="0 0 24 24"><path d="M3 17.25V21h3.75L17.81 9.94l-3.75-3.75L3 17.25zM20.71 7.04c.39-.39.39-1.02 0-1.41l-2.34-2.34a.9959.9959 0 0 0-1.41 0l-1.83 1.83 3.75 3.75 1.83-1.830z" fill="#444"/></svg>
<div class="a" style="left:47.5px;top:445.6px;width:15.0px;height:16.0px;background:#fff"></div>
<svg class="a" style="left:48.0px;top:446.6px;" width="14" height="14" viewBox="0 0 24 24"><path d="M22 5.72l-4.6-3.86-1.29 1.53 4.6 3.86L22 5.72zM7.88 3.39L6.6 1.86 2 5.71l1.29 1.53 4.59-3.85zM12.5 8H11v6l4.75 2.85.75-1.23-4-2.37V8zM12 4c-4.97 0-9 4.03-9 9s4.02 9 9 9c4.97 0 9-4.03 9-9s-4.03-9-9-9zm0 16c-3.87 0-7-3.13-7-7s3.13-7 7-7 7 3.13 7 7-3.13 7-7 7z" fill="#111"/></svg>
<div class="a" style="left:185.0px;top:460.6px;width:4.5px;height:4.5px;background:#e91e63;border-radius:50%"></div>
<div class="a" style="left:47.0px;top:488.0px;width:35.0px;height:14.0px;background:#8c92aa;border-radius:1px"></div>
<div class="t" style="left:-35.5px;width:200px;text-align:center;top:493px;font-size:6.3px;color:#f4f4f8;font-weight:700;">Previous</div>
<div class="a" style="left:94.0px;top:489.5px;width:11.0px;height:11.0px;background:#f0a030;border-radius:50%"></div>
<div class="t" style="left:-0.5px;width:200px;text-align:center;top:493px;font-size:6.3px;color:#fff;font-weight:700;">1</div>
<div class="t" style="left:22.0px;width:200px;text-align:center;top:493px;font-size:6.5px;color:#333;font-weight:700;">2</div>
<div class="t" style="left:44.0px;width:200px;text-align:center;top:493px;font-size:6.5px;color:#333;font-weight:700;">3</div>
<div class="a" style="left:161.0px;top:488.0px;width:30.5px;height:14.0px;background:#3d4670;border-radius:1px"></div>
<div class="t" style="left:76.2px;width:200px;text-align:center;top:493px;font-size:6.3px;color:#fff;font-weight:700;">Next</div>
<div class="t " style="left:217.4px;top:40px;font-size:7.2px;color:#2f3d8a;font-weight:400;-webkit-text-stroke:0.12px #2f3d8a">Fluent Services Console</div>
<div class="t " style="left:753.0px;top:40px;font-size:6.5px;color:#444;font-weight:400;">Status :</div>
<div class="a" style="left:778.0px;top:39.0px;width:30.0px;height:8.0px;background:#e8414f;border-radius:4px"></div>
<div class="t" style="left:693.0px;width:200px;text-align:center;top:40px;font-size:6px;color:#fff;font-weight:700;">Stopped</div>
<div class="a" style="left:828.6px;top:35.8px;width:38.4px;height:13.7px;background:#3cbf6e;border-radius:1px;box-shadow:0 1px 2px rgba(0,0,0,.35)"></div>
<div class="t " style="left:834.3px;top:41px;font-size:5.7px;color:#fff;font-weight:700;">START</div>
<div class="a" style="left:855.7px;top:39.0px;width:7.8px;height:7.5px;background:#fff;border-radius:1px"></div>
<svg class="a" style="left:895.5px;top:40.0px;" width="10" height="10" viewBox="0 0 24 24"><path d="M19 6.41L17.59 5 12 10.59 6.41 5 5 6.41 10.59 12 5 17.59 6.41 19 12 13.41 17.59 19 19 17.59 13.41 12z" fill="#444"/></svg>
<div class="t " style="left:227.0px;top:58px;font-size:6.5px;color:#a4a4a4;font-weight:400;">Name</div>
<div class="a" style="left:227.0px;top:77.4px;width:95.7px;height:1.0px;background:#bdbdbd"></div>
<div class="t " style="left:227.0px;top:70px;font-size:6.85px;color:#222;font-weight:400;-webkit-text-stroke:0.1px #222">Fluent Service name</div>
<div class="t " style="left:339.6px;top:58px;font-size:6.5px;color:#a4a4a4;font-weight:400;">Description</div>
<div class="a" style="left:339.6px;top:77.4px;width:100.8px;height:1.0px;background:#bdbdbd"></div>
<div class="t " style="left:339.6px;top:70px;font-size:6.85px;color:#222;font-weight:400;-webkit-text-stroke:0.1px #222">Connector for SAP MM Module</div>
<div class="t " style="left:457.7px;top:58px;font-size:6.5px;color:#a4a4a4;font-weight:400;">Utiliser Type</div>
<div class="a" style="left:457.7px;top:67.3px;width:96.3px;height:10.7px;background:#e2e2e2"></div>
<div class="a" style="left:457.7px;top:77.4px;width:96.3px;height:1.0px;background:#bdbdbd"></div>
<div class="t " style="left:458.2px;top:70px;font-size:6.85px;color:#222;font-weight:400;-webkit-text-stroke:0.1px #222">Entity Schema</div>
<div class="t " style="left:571.3px;top:58px;font-size:6.5px;color:#a4a4a4;font-weight:400;">Data Item Schema</div>
<div class="a" style="left:571.3px;top:67.3px;width:95.7px;height:10.7px;background:#e2e2e2"></div>
<div class="a" style="left:571.3px;top:77.4px;width:95.7px;height:1.0px;background:#bdbdbd"></div>
<div class="t " style="left:571.8px;top:70px;font-size:6.85px;color:#222;font-weight:400;-webkit-text-stroke:0.1px #222">SAP MM Conector</div>
<div class="t " style="left:684.0px;top:58px;font-size:6.5px;color:#a4a4a4;font-weight:400;">mapOperation Type</div>
<div class="a" style="left:684.0px;top:77.4px;width:95.8px;height:1.0px;background:#bdbdbd"></div>
<div class="t " style="left:684.0px;top:70px;font-size:6.85px;color:#222;font-weight:400;-webkit-text-stroke:0.1px #222">Value</div>
<svg class="a" style="left:755.5px;top:67.0px;" width="12" height="12" viewBox="0 0 24 24"><path d="M7 10l5 5 5-5z" fill="#555"/></svg>
<div class="t " style="left:792.0px;top:58px;font-size:6.5px;color:#a4a4a4;font-weight:400;">beforeAfterID</div>
<div class="a" style="left:792.0px;top:77.4px;width:96.6px;height:1.0px;background:#bdbdbd"></div>
<div class="t " style="left:792.0px;top:70px;font-size:6.85px;color:#222;font-weight:400;-webkit-text-stroke:0.1px #222">Value</div>
<div class="t " style="left:227.0px;top:84px;font-size:6.35px;color:#a4a4a4;font-weight:400;">Fluent Service Property</div>
<svg class="a" style="left:294.6px;top:81.7px;" width="8" height="8" viewBox="0 0 24 24"><circle cx="12" cy="12" r="11" fill="#444"/><text x="12" y="17.5" font-size="16" font-weight="700" text-anchor="middle" fill="#fff" font-family="Liberation Sans">?</text></svg>
<div class="a" style="left:227.0px;top:92.0px;width:1.0px;height:25.5px;background:#e6e6e6"></div>
<div class="a" style="left:502.0px;top:92.0px;width:1.0px;height:25.5px;background:#e2e2e2"></div>
<div class="t " style="left:232.0px;top:102px;font-size:6.65px;color:#777;font-weight:400;">ServiceExample( id?: <span style="color:#3a47a0">String</span>, intervalInSecs: <span style="color:#3a47a0">Long</span> = 2, empsc <span style="color:#3a47a0">HFDataTable</span> )</div>
<div class="t " style="left:512.0px;top:84px;font-size:6.35px;color:#a4a4a4;font-weight:400;">Return Schema</div>
<svg class="a" style="left:559.0px;top:81.7px;" width="8" height="8" viewBox="0 0 24 24"><circle cx="12" cy="12" r="11" fill="#444"/><text x="12" y="17.5" font-size="16" font-weight="700" text-anchor="middle" fill="#fff" font-family="Liberation Sans">?</text></svg>
<div class="a" style="left:511.0px;top:92.0px;width:1.0px;height:25.5px;background:#e2e2e2"></div>
<div class="t " style="left:516.0px;top:102px;font-size:6.85px;color:#777;font-weight:400;">{ employeeName: <span style="color:#3a47a0">String</span>, salary: <span style="color:#3a47a0">Double</span> }</div>
<div class="a" style="left:777.4px;top:101.2px;width:61.6px;height:14.6px;background:#1e9089;border-radius:1px;box-shadow:0 1px 1px rgba(0,0,0,.25)"></div>
<div class="t" style="left:708.2px;width:200px;text-align:center;top:107px;font-size:5.75px;color:#fff;font-weight:700;">SAVE SERVICE</div>
<div class="a" style="left:849.6px;top:101.5px;width:41.9px;height:14.5px;background:#f6f6f6;border-radius:1px;box-shadow:0 1px 2px rgba(0,0,0,.3)"></div>
<div class="t" style="left:770.5px;width:200px;text-align:center;top:106px;font-size:6px;color:#444;font-weight:400;">CANCEL</div>
<div class="t " style="left:218.0px;top:124px;font-size:7.2px;color:#2f3d8a;font-weight:400;-webkit-text-stroke:0.12px #2f3d8a">Service Definition</div>
<div class="a" style="left:220.3px;top:136.3px;width:682.7px;height:393.7px;background:#f2f2f2"></div>
<div class="a" style="left:225.0px;top:141.2px;width:159.6px;height:385.8px;background:#fff;box-shadow:0 1px 2px rgba(0,0,0,.28)"></div>
<div class="t " style="left:232.6px;top:149px;font-size:10.8px;color:#333;font-weight:400;font-family:Liberation Serif;font-style:italic">f(x)</div>
<div class="t " style="left:254.3px;top:152px;font-size:6.05px;color:#222;font-weight:400;-webkit-text-stroke:0.1px #222">FUNCTIONS</div>
<div class="a" style="left:225.0px;top:164.6px;width:74.3px;height:1.4px;background:#f3b56a"></div>
<div class="a" style="left:225.0px;top:166.0px;width:159.6px;height:1.0px;background:#eee"></div>
<svg class="a" style="left:316.6px;top:148.1px;" width="12.5" height="12.5" viewBox="0 0 24 24"><path d="M19.14 12.94c.04-.3.06-.61.06-.94 0-.32-.02-.64-.07-.94l2.03-1.58c.18-.14.23-.41.12-.61l-1.92-3.32c-.12-.22-.37-.29-.59-.22l-2.39.96c-.5-.38-1.03-.7-1.62-.94l-.36-2.54c-.04-.24-.24-.41-.48-.41h-3.84c-.24 0-.43.17-.47.41l-.36 2.54c-.59.24-1.13.57-1.62.94l-2.39-.96c-.22-.08-.47 0-.59.22L2.74 8.87c-.12.21-.08.47.12.61l2.03 1.58c-.05.3-.09.63-.09.94s.02.64.07.94l-2.03 1.58c-.18.14-.23.41-.12.61l1.92 3.32c.12.22.37.29.59.22l2.39-.96c.5.38 1.03.7 1.62.94l.36 2.54c.05.24.24.41.48.41h3.84c.24 0 .44-.17.47-.41l.36-2.54c.59-.24 1.13-.56 1.62-.94l2.39.96c.22.08.47 0 .59-.22l1.92-3.32c.12-.22.07-.47-.12-.61l-2.01-1.58zM12 15.6c-1.98 0-3.6-1.62-3.6-3.6s1.62-3.6 3.6-3.6 3.6 1.62 3.6 3.6-1.62 3.6-3.6 3.6z" fill="#333"/></svg>
<div class="t " style="left:334.0px;top:153px;font-size:5.7px;color:#222;font-weight:400;-webkit-text-stroke:0.1px #222">SERVICES</div>
<div class="a" style="left:225.0px;top:167.4px;width:159.6px;height:18.1px;background:#fff;box-shadow:0 1.5px 2px rgba(0,0,0,.22)"></div>
<svg class="a" style="left:233.3px;top:171.1px;" width="10.5" height="10.5" viewBox="0 0 24 24"><path d="M15.5 14h-.79l-.28-.27C15.41 12.59 16 11.11 16 9.5 16 5.91 13.09 3 9.5 3S3 5.91 3 9.5 5.91 16 9.5 16c1.610 0 3.09-.59 4.23-1.57l.27.28v.79l5 4.99L20.49 19l-4.99-5zm-6 0C7.01 14 5 11.99 5 9.5S7.01 5 9.5 5 14 7.01 14 9.5 11.99 14 9.5 14z" fill="#333"/></svg>
<div class="t " style="left:250.0px;top:175px;font-size:5.8px;color:#bbb;font-weight:400;">Search</div>
<svg class="a" style="left:349.7px;top:171.3px;" width="10" height="10" viewBox="0 0 24 24"><path d="M19 6.41L17.59 5 12 10.59 6.41 5 5 6.41 10.59 12 5 17.59 6.41 19 12 13.41 17.59 19 19 17.59 13.41 12z" fill="#333"/></svg>
<div class="a" style="left:364.0px;top:171.5px;width:0.8px;height:9.5px;background:#ccc"></div>
<svg class="a" style="left:368.2px;top:171.2px;" width="10.5" height="10.5" viewBox="0 0 24 24"><path d="M10 18h4v-2h-4v2zM3 6v2h18V6H3zm3 7h12v-2H6v2z" fill="#333"/></svg>
<div class="a" style="left:386.8px;top:141.0px;width:10.7px;height:24.6px;background:#fff;box-shadow:0 1px 2px rgba(0,0,0,.25)"></div>
<svg class="a" style="left:387.0px;top:148.3px;" width="10" height="10" viewBox="0 0 24 24"><path d="M15.41 7.41L14 6l-6 6 6 6 1.41-1.41L10.83 12z" fill="#333"/></svg>
<div class="t " style="left:234.7px;top:195px;font-size:6.95px;color:#3a47a0;font-weight:400;">Built-in Functions (10)</div>
<svg class="a" style="left:367.5px;top:193.8px;" width="7" height="7" viewBox="0 0 24 24"><path d="M5 15l7-7 7 7" fill="none" stroke="#444" stroke-width="3"/></svg>
<div class="a" style="left:225.0px;top:204.2px;width:159.6px;height:0.8px;background:#e6e6e6"></div>
<div class="t " style="left:259.0px;top:210px;font-size:7.3px;color:#222;font-weight:400;">Filter</div>
<div class="t " style="left:259.0px;top:226px;font-size:6.9px;color:#8a8a8a;font-weight:400;">Descripton of view goes here</div>
<svg class="a" style="left:234.9px;top:214.2px;" width="11.5" height="11.5" viewBox="0 0 24 24"><path d="M10 18h4v-2h-4v2zM3 6v2h18V6H3zm3 7h12v-2H6v2z" fill="#444"/></svg>
<div class="a" style="left:225.0px;top:239.4px;width:159.6px;height:0.8px;background:#e6e6e6"></div>
<div class="t " style="left:259.0px;top:244px;font-size:7.3px;color:#222;font-weight:400;">View</div>
<div class="t " style="left:259.0px;top:260px;font-size:6.9px;color:#8a8a8a;font-weight:400;">Descripton of view goes here</div>
<svg class="a" style="left:234.9px;top:249.2px;" width="11.5" height="11.5" viewBox="0 0 24 24"><path d="M12 4.5C7 4.5 2.73 7.61 1 12c1.73 4.39 6 7.5 11 7.5s9.27-3.11 11-7.5c-1.73-4.39-6-7.5-11-7.5zM12 17c-2.76 0-5-2.24-5-5s2.24-5 5-5 5 2.24 5 5-2.24 5-5 5zm0-8c-1.66 0-3 1.34-3 3s1.34 3 3 3 3-1.34 3-3-1.34-3-3-3z" fill="#333"/></svg>
<div class="t " style="left:259.0px;top:280px;font-size:7.3px;color:#222;font-weight:400;">Map</div>
<div class="t " style="left:259.0px;top:295px;font-size:6.9px;color:#8a8a8a;font-weight:400;">Descripton of map goes here</div>
<svg class="a" style="left:234.9px;top:284.8px;" width="11.5" height="11.5" viewBox="0 0 24 24"><path d="M6.99 11L3 15l3.99 4v-3H14v-2H6.99v-3zM21 9l-3.99-4v3H10v2h7.01v3L21 9z" fill="#333"/></svg>
<div class="a" style="left:225.0px;top:307.6px;width:159.6px;height:0.8px;background:#e6e6e6"></div>
<div class="t " style="left:259.0px;top:314px;font-size:7.3px;color:#222;font-weight:400;">Group By</div>
<div class="t " style="left:259.0px;top:330px;font-size:6.9px;color:#8a8a8a;font-weight:400;">Descripton of group by goes here</div>
<svg class="a" style="left:234.9px;top:319.2px;" width="11.5" height="11.5" viewBox="0 0 24 24"><path d="M12 2C6.48 2 2 6.48 2 12s4.48 10 10 10 10-4.48 10-10S17.52 2 12 2zM8 17.5c-1.38 0-2.5-1.12-2.5-2.5s1.12-2.5 2.5-2.5 2.5 1.12 2.5 2.5-1.12 2.5-2.5 2.5zM9.5 8c0-1.38 1.12-2.5 2.5-2.5s2.5 1.12 2.5 2.5-1.12 2.5-2.5 2.5S9.5 9.38 9.5 8zm6.5 9.5c-1.38 0-2.5-1.12-2.5-2.5s1.12-2.5 2.5-2.5 2.5 1.12 2.5 2.5-1.12 2.5-2.5 2.5z" fill="#333"/></svg>
<div class="a" style="left:225.0px;top:342.5px;width:159.6px;height:0.8px;background:#e6e6e6"></div>
<div class="t " style="left:234.7px;top:350px;font-size:6.95px;color:#3a47a0;font-weight:400;">Math Functions (10)</div>
<svg class="a" style="left:367.5px;top:348.8px;" width="7" height="7" viewBox="0 0 24 24"><path d="M5 15l7-7 7 7" fill="none" stroke="#444" stroke-width="3"/></svg>
<div class="t " style="left:259.0px;top:368px;font-size:7.3px;color:#222;font-weight:400;">Sum</div>
<div class="t " style="left:259.0px;top:383px;font-size:6.9px;color:#8a8a8a;font-weight:400;">Descripton of sum goes here</div>
<svg class="a" style="left:234.9px;top:371.2px;" width="11.5" height="11.5" viewBox="0 0 24 24"><path d="M19 13h-6v6h-2v-6H5v-2h6V5h2v6h6v2z" fill="#444"/></svg>
<div class="a" style="left:225.0px;top:396.5px;width:159.6px;height:0.8px;background:#e6e6e6"></div>
<div class="t " style="left:259.0px;top:403px;font-size:7.3px;color:#222;font-weight:400;">Average</div>
<div class="t " style="left:259.0px;top:418px;font-size:6.9px;color:#8a8a8a;font-weight:400;">Descripton of average goes here</div>
<svg class="a" style="left:234.9px;top:407.8px;" width="11.5" height="11.5" viewBox="0 0 24 24"><path d="M8 12h8M6 8l-4 4 4 4M18 8l4 4-4 4" fill="none" stroke="#444" stroke-width="1.8"/></svg>
<div class="a" style="left:225.0px;top:431.0px;width:159.6px;height:0.8px;background:#e6e6e6"></div>
<div class="t " style="left:259.0px;top:437px;font-size:7.3px;color:#222;font-weight:400;">Multiply</div>
<div class="t " style="left:259.0px;top:453px;font-size:6.9px;color:#8a8a8a;font-weight:400;">Descripton of multiply goes here</div>
<svg class="a" style="left:234.9px;top:442.2px;" width="11.5" height="11.5" viewBox="0 0 24 24"><path d="M19 6.41L17.59 5 12 10.59 6.41 5 5 6.41 10.59 12 5 17.59 6.41 19 12 13.41 17.59 19 19 17.59 13.41 12z" fill="#333"/></svg>
<div class="t " style="left:234.7px;top:473px;font-size:6.95px;color:#3a47a0;font-weight:400;">Database Functions (10)</div>
<svg class="a" style="left:367.5px;top:471.5px;" width="7" height="7" viewBox="0 0 24 24"><path d="M5 15l7-7 7 7" fill="none" stroke="#444" stroke-width="3"/></svg>
<div class="a" style="left:225.0px;top:485.0px;width:159.6px;height:0.8px;background:#e6e6e6"></div>
<div class="t " style="left:259.0px;top:491px;font-size:7.3px;color:#222;font-weight:400;">dbFilter</div>
<div class="t " style="left:259.0px;top:506px;font-size:6.9px;color:#8a8a8a;font-weight:400;">Descripton of multiply goes here</div>
<svg class="a" style="left:234.9px;top:-105.8px;" width="11.5" height="11.5" viewBox="0 0 24 24"></svg>
<svg class="a" style="left:239px;top:494px" width="14" height="11" viewBox="239 494 14 11"><ellipse cx="242.7" cy="498.3" rx="3.1" ry="0.9" fill="#555"/><path d="M239.6 498.6v5c0 1.1 6.2 1.1 6.2 0v-5c0 1-6.2 1-6.2 0z" fill="#9a9a9a"/><path d="M239.6 500.6c0 1 6.2 1 6.2 0M239.6 502.4c0 1 6.2 1 6.2 0" stroke="#fff" stroke-width=".5" fill="none"/><path d="M246 494.6h6.3l-2.3 2.6v3.3h-1.7v-3.3z" fill="#444"/></svg>
<div class="a" style="left:380.5px;top:260.0px;width:2.0px;height:62.4px;background:#888;border-radius:1px"></div>
<div class="a" style="left:401.7px;top:141.0px;width:481.0px;height:386.0px;background:#fff;box-shadow:0 1px 2px rgba(0,0,0,.25)"></div>
<div class="t " style="left:415.5px;top:149px;font-size:11px;color:#333;font-weight:700;">+</div>
<div class="t " style="left:432.5px;top:152px;font-size:6.95px;color:#4a3fc0;font-weight:400;">variableName1 :</div>
<div class="t " style="left:489.0px;top:152px;font-size:6.95px;color:#444;font-weight:400;">FindByNameAndId (id:</div>
<div class="t " style="left:597.6px;top:152px;font-size:6.95px;color:#444;font-weight:400;">, Name:</div>
<div class="t " style="left:662.0px;top:152px;font-size:6.95px;color:#4a3fc0;font-weight:400;">)</div>
<div class="a" style="left:414.5px;top:172.6px;width:8.5px;height:1.0px;background:#444"></div>
<div class="t " style="left:432.5px;top:171px;font-size:6.95px;color:#4a3fc0;font-weight:400;">variableName2 :</div>
<div class="t " style="left:489.0px;top:171px;font-size:6.95px;color:#444;font-weight:400;">Map Function (id:</div>
<div class="a" style="left:544.0px;top:175.5px;width:37.7px;height:0.8px;background:#4a5ad0"></div>
<div class="t " style="left:582.0px;top:171px;font-size:6.95px;color:#444;font-weight:400;">, Name:</div>
<div class="a" style="left:609.8px;top:175.5px;width:38.7px;height:0.8px;background:#4a5ad0"></div>
<div class="t " style="left:650.0px;top:171px;font-size:6.95px;color:#444;font-weight:400;">)</div>
<svg class="a" style="left:863.4px;top:149.5px;" width="11" height="11" viewBox="0 0 24 24"><path d="M6 19c0 1.1.9 2 2 2h8c1.1 0 2-.9 2-2V7H6v12zM19 4h-3.5l-1-1h-5l-1 1H5v2h14V4z" fill="#444"/></svg>
<svg class="a" style="left:863.9px;top:166.8px;" width="10" height="10" viewBox="0 0 24 24"><rect x="5" y="3" width="14" height="18" fill="#444"/><rect x="4" y="2" width="16" height="2" fill="#444"/></svg>
<div class="t " style="left:489.0px;top:187px;font-size:6.8px;color:#444;font-weight:400;">Select Entities</div>
<div class="t " style="left:489.0px;top:200px;font-size:6.0px;color:#a4a4a4;font-weight:400;">From Entity <span style="color:#e33">*</span></div>
<div class="t " style="left:627.4px;top:200px;font-size:6.0px;color:#a4a4a4;font-weight:400;">To Entity <span style="color:#e33">*</span></div>
<div class="t " style="left:489.0px;top:211px;font-size:6.95px;color:#222;font-weight:400;">Trips</div>
<div class="a" style="left:489.0px;top:219.5px;width:99.0px;height:0.9px;background:#d6d6d6"></div>
<svg class="a" style="left:575.2px;top:208.0px;" width="12" height="12" viewBox="0 0 24 24"><path d="M7 10l5 5 5-5z" fill="#444"/></svg>
<div class="t " style="left:627.4px;top:211px;font-size:6.95px;color:#222;font-weight:400;">Association</div>
<div class="a" style="left:627.4px;top:219.5px;width:97.9px;height:0.9px;background:#d6d6d6"></div>
<svg class="a" style="left:712.5px;top:208.0px;" width="12" height="12" viewBox="0 0 24 24"><path d="M7 10l5 5 5-5z" fill="#444"/></svg>
<div class="t " style="left:490.0px;top:233px;font-size:6.85px;color:#444;font-weight:400;">Map Fields</div>
<div class="t " style="left:490.0px;top:251px;font-size:6.95px;color:#888;font-weight:400;">Trip No</div>
<div class="a" style="left:490.0px;top:258.6px;width:98.0px;height:0.9px;background:#d6d6d6"></div>
<svg class="a" style="left:575.2px;top:247.3px;" width="12" height="12" viewBox="0 0 24 24"><path d="M7 10l5 5 5-5z" fill="#444"/></svg>
<div class="t " style="left:627.4px;top:251px;font-size:6.95px;color:#888;font-weight:400;">Trip No</div>
<div class="a" style="left:627.4px;top:258.6px;width:97.9px;height:0.9px;background:#d6d6d6"></div>
<svg class="a" style="left:712.5px;top:247.3px;" width="12" height="12" viewBox="0 0 24 24"><path d="M7 10l5 5 5-5z" fill="#444"/></svg>
<div class="t " style="left:490.0px;top:275px;font-size:6.95px;color:#888;font-weight:400;">Vehicle No</div>
<div class="a" style="left:490.0px;top:283.6px;width:98.0px;height:0.9px;background:#d6d6d6"></div>
<svg class="a" style="left:575.2px;top:271.9px;" width="12" height="12" viewBox="0 0 24 24"><path d="M7 10l5 5 5-5z" fill="#444"/></svg>
<div class="t " style="left:627.4px;top:275px;font-size:6.95px;color:#888;font-weight:400;">Select Field</div>
<div class="a" style="left:627.4px;top:283.6px;width:97.9px;height:0.9px;background:#d6d6d6"></div>
<svg class="a" style="left:712.5px;top:271.9px;" width="12" height="12" viewBox="0 0 24 24"><path d="M7 10l5 5 5-5z" fill="#444"/></svg>
<div class="t " style="left:490.0px;top:300px;font-size:6.95px;color:#888;font-weight:400;">Tonnage</div>
<div class="a" style="left:490.0px;top:308.4px;width:98.0px;height:0.9px;background:#d6d6d6"></div>
<svg class="a" style="left:575.2px;top:296.9px;" width="12" height="12" viewBox="0 0 24 24"><path d="M7 10l5 5 5-5z" fill="#444"/></svg>
<div class="t " style="left:627.4px;top:300px;font-size:6.95px;color:#aaa;font-weight:400;">adjustedValue</div>
<div class="a" style="left:627.4px;top:308.4px;width:97.9px;height:0.9px;background:#d6d6d6"></div>
<div class="t " style="left:490.0px;top:325px;font-size:6.95px;color:#888;font-weight:400;">Cycle Time</div>
<div class="a" style="left:490.0px;top:332.8px;width:98.0px;height:0.9px;background:#d6d6d6"></div>
<svg class="a" style="left:575.2px;top:321.7px;" width="12" height="12" viewBox="0 0 24 24"><path d="M7 10l5 5 5-5z" fill="#444"/></svg>
<div class="t " style="left:627.4px;top:325px;font-size:6.95px;color:#aaa;font-weight:400;">adjustedValue</div>
<div class="a" style="left:627.4px;top:332.8px;width:97.9px;height:0.9px;background:#d6d6d6"></div>
<div class="t " style="left:598.3px;top:298px;font-size:10.2px;color:#3a3ad0;font-weight:700;font-family:Liberation Serif;font-style:italic">f(x)</div>
<div class="t " style="left:598.3px;top:323px;font-size:10.2px;color:#3a3ad0;font-weight:700;font-family:Liberation Serif;font-style:italic">f(x)</div>
<div class="a" style="left:874.6px;top:256.4px;width:2.6px;height:61.9px;background:#888;border-radius:1px"></div>
<div class="a" style="left:552.4px;top:347.2px;width:330.3px;height:10.5px;background:#fdcfd2"></div>
<div class="t " style="left:487.5px;top:349px;font-size:9px;color:#555;font-weight:400;">+</div>
<div class="t " style="left:504.0px;top:350px;font-size:6.95px;color:#4a3fc0;font-weight:400;">variableName3 :</div>
<div class="t " style="left:556.0px;top:350px;font-size:6.95px;color:#444;font-weight:400;">FindAll (id:</div>
<div class="a" style="left:590.0px;top:355.0px;width:40.0px;height:0.8px;background:#4a5ad0"></div>
<div class="t " style="left:631.0px;top:350px;font-size:6.95px;color:#444;font-weight:400;">)</div>
<svg class="a" style="left:863.5px;top:347.3px;" width="10" height="10" viewBox="0 0 24 24"><rect x="5" y="3" width="14" height="18" fill="#444"/><rect x="4" y="2" width="16" height="2" fill="#444"/></svg>
<div class="a" style="left:486.0px;top:372.4px;width:8.0px;height:1.0px;background:#444"></div>
<div class="t " style="left:504.0px;top:370px;font-size:6.95px;color:#4a3fc0;font-weight:400;">variableName3 :</div>
<div class="t " style="left:564.6px;top:370px;font-size:6.95px;color:#444;font-weight:400;">Filter Function (id:</div>
<div class="t " style="left:661.0px;top:370px;font-size:6.95px;color:#4a3fc0;font-weight:400;">)</div>
<svg class="a" style="left:863.0px;top:366.8px;" width="11" height="11" viewBox="0 0 24 24"><path d="M6 19c0 1.1.9 2 2 2h8c1.1 0 2-.9 2-2V7H6v12zM19 4h-3.5l-1-1h-5l-1 1H5v2h14V4z" fill="#444"/></svg>
<div class="a" style="left:563.4px;top:384.5px;width:20.6px;height:13.9px;background:#fff;border:1px solid #7aa7d8;border-radius:1px"></div>
<div class="t" style="left:473.7px;width:200px;text-align:center;top:390px;font-size:5.6px;color:#5577aa;font-weight:400;">AND</div>
<div class="a" style="left:584.0px;top:384.5px;width:17.2px;height:13.9px;background:#dcdcdc;border:1px solid #ccc"></div>
<div class="t" style="left:492.6px;width:200px;text-align:center;top:390px;font-size:5.6px;color:#333;font-weight:400;">OR</div>
<div class="a" style="left:720.0px;top:384.2px;width:30.8px;height:14.2px;background:#fff;border:1px solid #e0e0e0;border-radius:1px;box-shadow:0 1px 1px rgba(0,0,0,.15)"></div>
<div class="t " style="left:724.0px;top:389px;font-size:6px;color:#333;font-weight:400;"><b style="font-size:8px">&#x271A;</b></div>
<div class="t " style="left:732.0px;top:389px;font-size:6px;color:#3a4a8a;font-weight:400;">Rule</div>
<div class="a" style="left:754.4px;top:384.2px;width:38.4px;height:14.2px;background:#fff;border:1px solid #e0e0e0;border-radius:1px;box-shadow:0 1px 1px rgba(0,0,0,.15)"></div>
<div class="t " style="left:758.0px;top:389px;font-size:6px;color:#333;font-weight:400;"><b style="font-size:8px">&#x271A;</b></div>
<div class="t " style="left:766.0px;top:389px;font-size:6px;color:#3a4a8a;font-weight:400;">Ruleset</div>
<div class="a" style="left:577.3px;top:398.4px;width:0.8px;height:25.6px;background:#ddd"></div>
<div class="a" style="left:581.3px;top:401.6px;width:211.5px;height:21.2px;background:#fcfcfc;border:1px solid #e8e8e8"></div>
<div class="a" style="left:577.3px;top:412.0px;width:4.0px;height:0.8px;background:#ddd"></div>
<div class="a" style="left:586.6px;top:404.5px;width:54.6px;height:15.1px;background:#fff;border:1px solid #e2e2e2"></div>
<div class="t " style="left:590.0px;top:410px;font-size:6.8px;color:#666;font-weight:400;">Age</div>
<div class="a" style="left:646.2px;top:404.6px;width:16.8px;height:15.0px;background:#fff;border:1px solid #e8e8e8"></div>
<div class="t" style="left:554.6px;width:200px;text-align:center;top:409px;font-size:6.2px;color:#999;font-weight:400;">&lt;=</div>
<div class="a" style="left:668.0px;top:404.6px;width:76.6px;height:15.0px;background:#fff;border:1px solid #eee"></div>
<div class="a" style="left:774.4px;top:404.6px;width:14.6px;height:14.7px;background:#fff;border:1px solid #e2e2e2;box-shadow:0 1px 1px rgba(0,0,0,.12)"></div>
<svg class="a" style="left:778.2px;top:408.5px;" width="7" height="7" viewBox="0 0 24 24"><path d="M5 5L19 19M19 5L5 19" stroke="#b02020" stroke-width="4.5"/></svg>
<div class="a" style="left:422.2px;top:424.5px;width:213.8px;height:73.2px;background:#454749;box-shadow:0 1px 2px rgba(0,0,0,.4)"></div>
<div class="a" style="left:422.2px;top:424.5px;width:213.8px;height:16.9px;background:#fff;border:1px solid #555"></div>
<div class="t " style="left:425.1px;top:432px;font-size:6.8px;color:#222;font-weight:400;-webkit-text-stroke:0.2px #222">get</div>
<div class="a" style="left:422.7px;top:441.4px;width:212.8px;height:10.0px;background:#505356"></div>
<div class="a" style="left:424.8px;top:444.3px;width:5.8px;height:6.0px;background:#d46a8a;border-radius:50%"></div>
<div class="t " style="left:432.8px;top:445px;font-size:6.6px;color:#bbb;font-weight:400;font-family:Liberation Mono;letter-spacing:-0.55px"><span style="color:#5c9ee8">get</span><span style="color:#b8bcc2">UserDetailsByIds</span><span style="color:#8a8e92">(us…</span></div>
<div class="t" style="right:273.0px;top:445px;font-size:6.6px;color:#8a8e92;font-weight:400;font-family:Liberation Mono;letter-spacing:-0.55px">Future[UserAccountContactHolder]</div>
<div class="a" style="left:424.8px;top:455.9px;width:5.8px;height:6.0px;background:#5a9e4a;border-radius:50%"></div>
<div class="t " style="left:432.8px;top:456px;font-size:6.6px;color:#bbb;font-weight:400;font-family:Liberation Mono;letter-spacing:-0.55px"><span style="color:#5c9ee8">get</span><span style="color:#b8bcc2">MessageTypes</span><span style="color:#8a8e92"></span></div>
<div class="t" style="right:273.0px;top:456px;font-size:6.6px;color:#8a8e92;font-weight:400;font-family:Liberation Mono;letter-spacing:-0.55px">List[MetricsEnumValues]</div>
<div class="a" style="left:424.8px;top:466.8px;width:5.8px;height:6.0px;background:#d46a8a;border-radius:50%"></div>
<div class="t " style="left:432.8px;top:467px;font-size:6.6px;color:#bbb;font-weight:400;font-family:Liberation Mono;letter-spacing:-0.55px"><span style="color:#5c9ee8">get</span><span style="color:#b8bcc2">Class</span><span style="color:#8a8e92"></span></div>
<div class="t" style="right:273.0px;top:467px;font-size:6.6px;color:#8a8e92;font-weight:400;font-family:Liberation Mono;letter-spacing:-0.55px">Class[_]</div>
<div class="a" style="left:424.8px;top:478.6px;width:5.8px;height:6.0px;background:#d4953a;border-radius:50%"></div>
<div class="t " style="left:432.8px;top:479px;font-size:6.6px;color:#bbb;font-weight:400;font-family:Liberation Mono;letter-spacing:-0.55px"><span style="color:#b8bcc2">messa</span><span style="color:#5c9ee8">ge</span><span style="color:#b8bcc2">TypeId</span></div>
<div class="t" style="right:273.0px;top:479px;font-size:6.6px;color:#8a8e92;font-weight:400;font-family:Liberation Mono;letter-spacing:-0.55px">Long</div>
<div class="t " style="left:424.0px;top:491px;font-size:4.2px;color:#888;font-weight:400;">Press Ctrl+. to choose the selected (or first) suggestion and insert a dot afterwards <span style="color:#5c9ee8">Next Tip</span></div>
<div class="a" style="left:632.5px;top:489.0px;width:1.0px;height:7.0px;background:#aaa"></div>
<svg class="a" style="left:422px;top:502px" width="446" height="23"><rect x="0.9" y="0.9" width="444" height="21" fill="none" stroke="#8a8a8a" stroke-width="1.1" stroke-dasharray="4.2 2.3"/></svg>
<div class="t " style="left:577.5px;top:510px;font-size:7.4px;color:#2e3354;font-weight:400;">Drag and Drop a function or Service here</div>
<div class="a" style="left:883.7px;top:142.0px;width:14.3px;height:76.7px;background:#fff;box-shadow:0 1px 2px rgba(0,0,0,.25)"></div>
<div class="t" style="left:889.6px;top:145.6px;font-size:7.7px;color:#2e3354;transform-origin:0 0;transform:rotate(90deg) translate(0,-3.9px)">Testing &amp; Simulation</div>
<div class="a" style="left:294.3px;top:110.7px;width:48.7px;height:30.5px;background:#fff;border-top:1.2px solid #d8d8d8;border-left:1.2px solid #d8d8d8;box-shadow:1px 0 1px rgba(0,0,0,.06)"></div>
<div class="t " style="left:299.8px;top:117px;font-size:6.6px;color:#3b4270;font-weight:400;">HFString</div>
<div class="t " style="left:299.8px;top:126px;font-size:6.6px;color:#3b4270;font-weight:400;">HFLong</div>
<div class="t " style="left:299.8px;top:134px;font-size:6.6px;color:#3b4270;font-weight:400;">HFDataTable</div>
</body></html>
